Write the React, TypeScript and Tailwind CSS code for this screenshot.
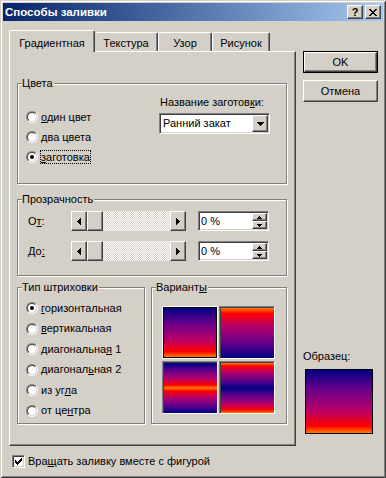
import React from "react";

const raised =
  "border border-t-white border-l-white border-r-[#404040] border-b-[#404040] shadow-[inset_-1px_-1px_0_#808080] bg-[#d4d0c8]";
const sunken =
  "border border-t-[#808080] border-l-[#808080] border-r-white border-b-white shadow-[inset_1px_1px_0_#404040,inset_-1px_-1px_0_#d4d0c8]";

function Radio({ checked }: { checked?: boolean }) {
  return (
    <span className="w-[12px] h-[12px] shrink-0 rounded-full border border-t-[#808080] border-l-[#808080] border-r-white border-b-white flex">
      <span className="flex-1 rounded-full border border-t-[#404040] border-l-[#404040] border-r-[#d4d0c8] border-b-[#d4d0c8] bg-white flex items-center justify-center">
        {checked && <span className="w-[4px] h-[4px] rounded-full bg-black" />}
      </span>
    </span>
  );
}

function Group({ label, className, children }: { label: React.ReactNode; className: string; children: React.ReactNode }) {
  return (
    <div className={`relative border border-[#808080] shadow-[inset_1px_1px_0_#fff,1px_1px_0_#fff] ${className}`}>
      <span className="absolute -top-[7px] left-[4px] bg-[#d4d0c8] pr-[1px] leading-[13px]">{label}</span>
      {children}
    </div>
  );
}

function Px({ d, w, h }: { d: string; w: number; h: number }) {
  return (
    <svg width={w} height={h} viewBox={`0 0 ${w} ${h}`} shapeRendering="crispEdges">
      <path d={d} fill="#000" />
    </svg>
  );
}

const leftTri = "M3 0h1v7h-1z M2 1h1v5h-1z M1 2h1v3h-1z M0 3h1v1h-1z";
const rightTri = "M0 0h1v7h-1z M1 1h1v5h-1z M2 2h1v3h-1z M3 3h1v1h-1z";
const upTri = "M3 0h1v1h-1z M2 1h3v1h-3z M1 2h5v1h-5z";
const downTri = "M1 0h5v1h-5z M2 1h3v1h-3z M3 2h1v1h-1z";
const comboTri = "M0 0h7v1h-7z M1 1h5v1h-5z M2 2h3v1h-3z M3 3h1v1h-1z";
const checkMark = "M0 2h1v3h-1z M1 3h1v3h-1z M2 4h1v3h-1z M3 3h1v3h-1z M4 2h1v3h-1z M5 1h1v3h-1z M6 0h1v3h-1z";
const closeX = "M0 0h2v1h-2z M6 0h2v1h-2z M1 1h2v1h-2z M5 1h2v1h-2z M2 2h4v1h-4z M3 3h2v1h-2z M2 4h4v1h-4z M1 5h2v1h-2z M5 5h2v1h-2z M0 6h2v1h-2z M6 6h2v1h-2z";

function ScrollBar() {
  return (
    <div className="flex w-[115px] h-[20px]">
      <div className={`${raised} w-[16px] flex items-center justify-center`}>
        <Px d={leftTri} w={4} h={7} />
      </div>
      <div className={`${raised} w-[16px]`} />
      <div className="flex-1 bg-[repeating-conic-gradient(#d4d0c8_0%_25%,#ffffff_0%_50%)] bg-[length:2px_2px]" />
      <div className={`${raised} w-[16px] flex items-center justify-center`}>
        <Px d={rightTri} w={4} h={7} />
      </div>
    </div>
  );
}

function Spinner() {
  return (
    <div className={`${sunken} ml-[12px] w-[71px] h-[20px] bg-white flex p-[1px]`}>
      <span className="flex-1 pl-[1px] leading-[16px]">0 %</span>
      <div className="w-[15px] flex flex-col">
        <div className={`${raised} flex-1 flex items-center justify-center`}>
          <Px d={upTri} w={7} h={3} />
        </div>
        <div className={`${raised} flex-1 flex items-center justify-center`}>
          <Px d={downTri} w={7} h={3} />
        </div>
      </div>
    </div>
  );
}

const sunset =
  "bg-[linear-gradient(to_bottom,#000082_0%,#66008c_30%,#ba0066_65%,#ff0000_89%,#ff8000_100%)]";

export default function App() {
  const hatch = [
    { pre: "", u: "г", post: "оризонтальная", checked: true },
    { pre: "", u: "в", post: "ертикальная" },
    { pre: "диагональна", u: "я", post: " 1" },
    { pre: "диагонал", u: "ь", post: "ная 2" },
    { pre: "из уг", u: "л", post: "а" },
    { pre: "от це", u: "н", post: "тра" },
  ];

  return (
    <div className="w-[386px] h-[478px] bg-[#d4d0c8] p-[3px] shadow-[inset_1px_1px_0_#d4d0c8,inset_-1px_-1px_0_#404040,inset_2px_2px_0_#fff,inset_-2px_-2px_0_#808080] font-['Liberation_Sans',Arial,sans-serif] text-[11px] leading-[13px] text-black flex flex-col">
      {/* title bar */}
      <div className="h-[18px] flex items-center justify-between bg-linear-to-r from-[#0a246a] to-[#a6caf0]">
        <span className="pl-[2px] text-white font-bold text-[11.5px]">Способы заливки</span>
        <div className="flex gap-[2px] pr-[2px]">
          <div className={`${raised} w-[16px] h-[14px] flex items-center justify-center font-bold text-[11px] leading-none`}>?</div>
          <div className={`${raised} w-[16px] h-[14px] flex items-center justify-center`}>
            <Px d={closeX} w={8} h={7} />
          </div>
        </div>
      </div>

      <div className="flex pl-[6px] pt-[9px] gap-[7px]">
        {/* left: tabs */}
        <div className="w-[287px] flex flex-col">
          <div className="flex items-end h-[21px]">
            <div className="relative z-10 w-[86px] h-[22px] -mb-[1px] bg-[#d4d0c8] border-l border-t border-white border-r border-r-[#404040] rounded-t-[2px] shadow-[inset_-1px_0_0_#808080] flex justify-center pt-[6px]">
              Градиентная
            </div>
            <div className="w-[63px] h-[19px] border-t border-r border-t-white border-r-[#404040] rounded-t-[2px] shadow-[inset_-1px_0_0_#808080] flex justify-center pt-[4px]">
              Текстура
            </div>
            <div className="w-[54px] h-[19px] border-l border-t border-r border-white border-r-[#404040] rounded-t-[2px] shadow-[inset_-1px_0_0_#808080] flex justify-center pt-[4px]">
              Узор
            </div>
            <div className="w-[58px] h-[19px] border-l border-t border-r border-white border-r-[#404040] rounded-t-[2px] shadow-[inset_-1px_0_0_#808080] flex justify-center pt-[4px]">
              Рисунок
            </div>
          </div>

          <div className="h-[395px] border border-t-white border-l-white border-r-[#404040] border-b-[#404040] shadow-[inset_-1px_-1px_0_#808080] pl-[7px] pt-[31px] flex flex-col">
            <Group label="Цвета" className="w-[270px] h-[101px] flex">
              <div className="w-[141px] pl-[8px] pt-[23px] flex flex-col">
                <div className="h-[20px] flex items-center gap-[3px]">
                  <Radio />
                  <span><u>о</u>дин цвет</span>
                </div>
                <div className="h-[20px] flex items-center gap-[3px]">
                  <Radio />
                  <span><u>д</u>ва цвета</span>
                </div>
                <div className="h-[20px] flex items-center gap-[2px]">
                  <Radio checked />
                  <span className="border border-dotted border-black leading-[12px]"><u>з</u>аготовка</span>
                </div>
              </div>
              <div className="pt-[12px] flex flex-col">
                <span className="pl-[1px]">Название заготов<u>к</u>и:</span>
                <div className={`${sunken} mt-[4px] w-[111px] h-[21px] bg-white flex items-stretch p-[1px]`}>
                  <span className="flex-1 pl-[2px] flex items-center">Ранний закат</span>
                  <div className={`${raised} w-[16px] flex items-center justify-center`}>
                    <Px d={comboTri} w={7} h={4} />
                  </div>
                </div>
              </div>
            </Group>

            <Group label="Прозрачность" className="mt-[15px] w-[270px] h-[77px] pl-[10px] pt-[11px] flex flex-col">
              <div className="h-[20px] flex items-center">
                <span className="w-[43px]">О<u>т</u>:</span>
                <ScrollBar />
                <Spinner />
              </div>
              <div className="mt-[10px] h-[20px] flex items-center">
                <span className="w-[43px]">До<u>:</u></span>
                <ScrollBar />
                <Spinner />
              </div>
            </Group>

            <div className="mt-[11px] flex gap-[6px]">
              <Group label="Тип штриховки" className="w-[128px] h-[137px] pl-[8px] pt-[10px] flex flex-col">
                {hatch.map((h, i) => (
                  <div key={i} className="h-[20.5px] flex items-center gap-[3px]">
                    <Radio checked={h.checked} />
                    <span>
                      {h.pre}
                      <u>{h.u}</u>
                      {h.post}
                    </span>
                  </div>
                ))}
              </Group>
              <Group label={<span>Вариант<u>ы</u></span>} className="w-[136px] h-[137px] pl-[10px] pt-[18px]">
                <div className="grid grid-cols-[56px_56px] gap-x-[1px] gap-y-[2px]">
                  <div className="h-[53px] border border-white shadow-[inset_1px_1px_0_#000,inset_-1px_-1px_0_#000] p-[1px]">
                    <div className={`w-full h-full ${sunset}`} />
                  </div>
                  <div className="h-[53px] border border-t-[#808080] border-l-[#808080] border-r-white border-b-white shadow-[inset_1px_1px_0_#404040] pl-[1px] pt-[1px]">
                    <div className="w-full h-full bg-[linear-gradient(to_top,#000082_0%,#66008c_30%,#ba0066_65%,#ff0000_89%,#ff8000_100%)]" />
                  </div>
                  <div className="h-[53px] border border-t-[#808080] border-l-[#808080] border-r-white border-b-white shadow-[inset_1px_1px_0_#404040] pl-[1px] pt-[1px]">
                    <div className="w-full h-full bg-[linear-gradient(to_bottom,#000082_0%,#66008c_16%,#ba0066_32%,#ff0000_44%,#ff8000_50%,#ff0000_56%,#ba0066_68%,#66008c_84%,#000082_100%)]" />
                  </div>
                  <div className="h-[53px] border border-t-[#808080] border-l-[#808080] border-r-white border-b-white shadow-[inset_1px_1px_0_#404040] pl-[1px] pt-[1px]">
                    <div className="w-full h-full bg-[linear-gradient(to_bottom,#ff8000_0%,#ff0000_6%,#ba0066_18%,#66008c_34%,#000082_50%,#66008c_66%,#ba0066_82%,#ff0000_94%,#ff8000_100%)]" />
                  </div>
                </div>
              </Group>
            </div>
          </div>

          <div className="mt-[9px] pl-[3px] flex items-center gap-[3px]">
            <span className={`${sunken} w-[13px] h-[13px] bg-white flex items-center justify-center`}>
              <Px d={checkMark} w={7} h={7} />
            </span>
            <span>Вра<u>щ</u>ать заливку вместе с фигурой</span>
          </div>
        </div>

        {/* right: buttons + sample */}
        <div className="w-[75px] h-[416px] flex flex-col">
          <div className="mt-[21px] h-[22px] border border-black flex">
            <div className={`${raised} flex-1 flex items-center justify-center`}>OK</div>
          </div>
          <div className={`${raised} mt-[7px] h-[22px] flex items-center justify-center`}>Отмена</div>
          <div className="flex-1" />
          <span>Образец:</span>
          <div className={`mt-[6px] ml-[2px] w-[68px] h-[65px] border border-black ${sunset}`} />
          <div className="h-[12px]" />
        </div>
      </div>
    </div>
  );
}
